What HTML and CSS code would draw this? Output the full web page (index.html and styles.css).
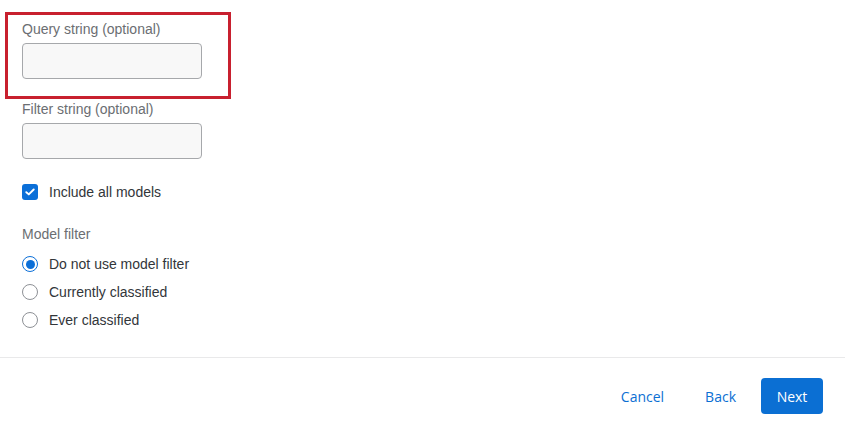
FILE: index.html
```html
<!DOCTYPE html>
<html lang="en">
<head>
<meta charset="utf-8">
<title>Query options</title>
<link rel="stylesheet" href="styles.css">
</head>
<body>
<div class="page">
  <main class="form">
    <div class="field field-highlighted">
      <label class="field-label" for="q">Query string (optional)</label>
      <input class="text-input" id="q" type="text">
      <span class="highlight"></span>
    </div>
    <div class="field">
      <label class="field-label" for="f">Filter string (optional)</label>
      <input class="text-input" id="f" type="text">
    </div>
    <div class="option option-check">
      <span class="checkbox">
        <svg width="10" height="8" viewBox="0 0 10 8"><path d="M1.3 4.2 L3.8 6.4 L8.7 1.5" fill="none" stroke="#fff" stroke-width="1.9" stroke-linecap="round" stroke-linejoin="round"/></svg>
      </span>
      <span class="option-text">Include all models</span>
    </div>
    <div class="group-label">Model filter</div>
    <div class="radios">
      <div class="option"><span class="radio radio-on"></span><span class="option-text">Do not use model filter</span></div>
      <div class="option"><span class="radio"></span><span class="option-text">Currently classified</span></div>
      <div class="option"><span class="radio"></span><span class="option-text">Ever classified</span></div>
    </div>
  </main>
  <footer class="footer">
    <button class="btn btn-link btn-cancel">Cancel</button>
    <button class="btn btn-link btn-back">Back</button>
    <button class="btn btn-primary">Next</button>
  </footer>
</div>
</body>
</html>
```
FILE: styles.css
```css
* { box-sizing: border-box; }
html, body { margin: 0; padding: 0; background: #fff; }
body {
  font-family: "Liberation Sans", Arial, sans-serif;
  font-size: 14px;
  line-height: 17px;
  color: #32363a;
}
.page { width: 845px; height: 425px; display: flex; flex-direction: column; }
.form { padding: 21px 22px 23px; display: flex; flex-direction: column; }
.field { position: relative; display: flex; flex-direction: column; align-items: flex-start; }
.field + .field { margin-top: 22px; }
.field-label { color: #6b6e72; margin-bottom: 5px; }
.text-input {
  width: 180px; height: 36px;
  border: 1px solid #a6a8ab; border-radius: 4px;
  background: #f8f8f8; margin: 0; padding: 0 10px; font: inherit;
}
.highlight {
  position: absolute; left: -17px; top: -9px;
  width: 226px; height: 87px;
  border: 3px solid #c8202f;
  pointer-events: none;
}
.option { display: flex; align-items: center; height: 28px; }
.option-check { margin-top: 19px; }
.option-text { margin-left: 11px; color: #32363a; }
.checkbox {
  width: 16px; height: 16px; border-radius: 3px; background: #0b6fd8;
  display: flex; align-items: center; justify-content: center; margin-left: 0;
}
.group-label { color: #6b6e72; margin-top: 20px; margin-bottom: 7px; }
.radios { display: flex; flex-direction: column; }
.radio {
  width: 16px; height: 16px; border-radius: 50%;
  border: 1px solid #8e9196; background: #fff;
  display: flex; align-items: center; justify-content: center;
}
.radio-on { border-color: #0b6fd8; }
.radio-on::after { content: ""; width: 9px; height: 9px; border-radius: 50%; background: #0b6fd8; }
.footer {
  border-top: 1px solid #e9e9ea;
  padding: 20px 22px 0;
  display: flex; justify-content: flex-end; align-items: center;
}
.btn {
  font-family: "Open Sans", "Liberation Sans", sans-serif;
  font-size: 14px; height: 36px; border: 0; border-radius: 4px; cursor: pointer; margin: 0;
}
.btn-link { background: none; color: #0b6fd3; padding: 0 14px; }
.btn-cancel { margin-right: 13px; }
.btn-back { margin-right: 11px; }
.btn-primary { background: #0b6fd3; color: #fff; width: 62px; padding: 0; }
```
